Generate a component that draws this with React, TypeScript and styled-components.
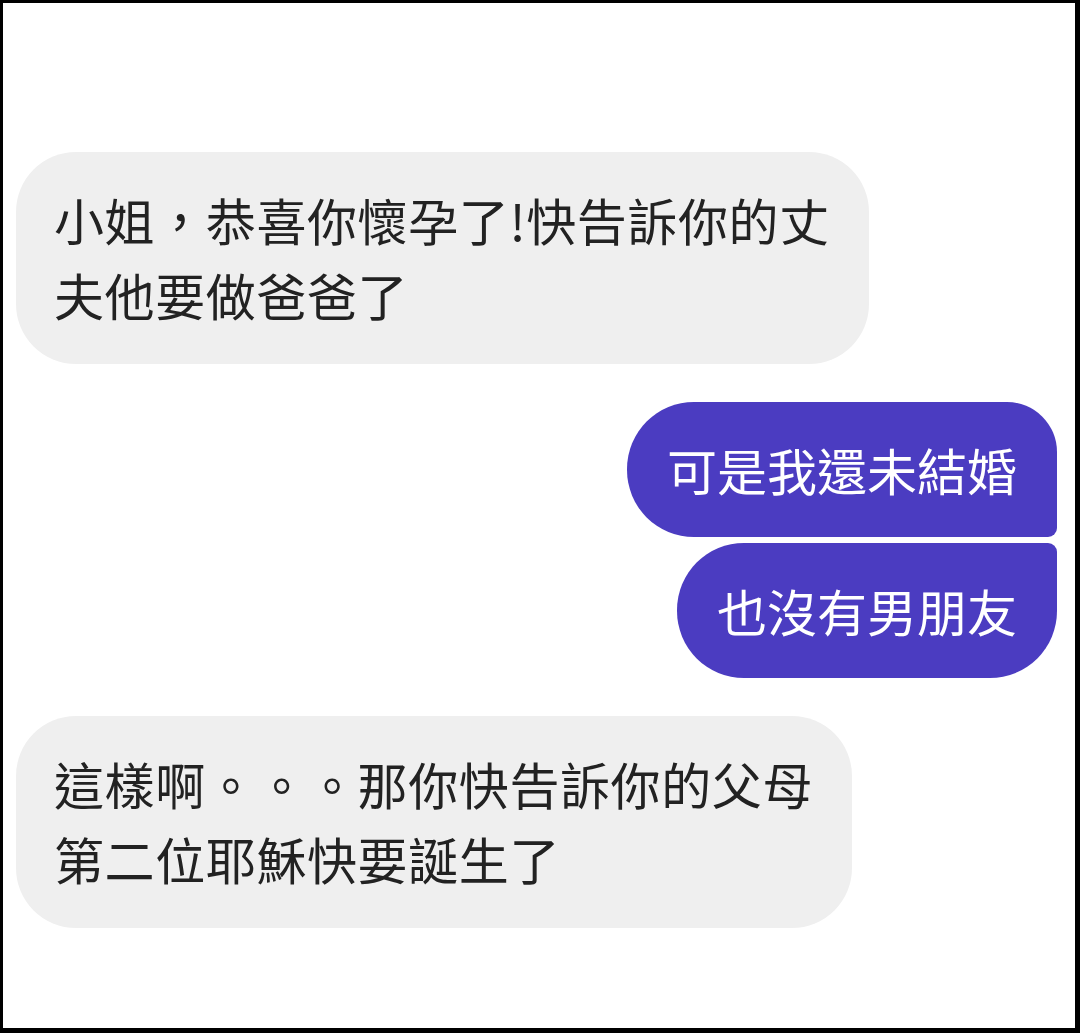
import React from 'react';
import styled, { createGlobalStyle } from 'styled-components';

const GlobalStyle = createGlobalStyle`
  html, body {
    margin: 0;
    padding: 0;
    background: #000;
  }
  * {
    box-sizing: border-box;
  }
`;

const Frame = styled.div`
  width: 1080px;
  height: 1033px;
  border-style: solid;
  border-color: #000;
  border-width: 3px 5px 5px 3px;
  background: #fff;
  padding: 149px 18px 0 13px;
  display: flex;
  flex-direction: column;
  gap: 38px;
  font-family: 'Noto Sans CJK TC', 'Noto Sans CJK SC', sans-serif;
`;

const Group = styled.div<{ $mine?: boolean }>`
  display: flex;
  flex-direction: column;
  align-items: ${(p) => (p.$mine ? 'flex-end' : 'flex-start')};
  gap: 6px;
`;

const Bubble = styled.div`
  font-size: 50px;
  line-height: 75px;
  white-space: nowrap;
`;

const Received = styled(Bubble)`
  background: #efefef;
  color: #222;
  letter-spacing: 0.6px;
  padding: 30px 39px 32px 38px;
  border-radius: 60px;
`;

const Sent = styled(Bubble)<{ $pos: 'first' | 'last' }>`
  background: #4b3cc1;
  color: #fff;
  padding: 30px 40px;
  border-radius: ${(p) =>
    p.$pos === 'first' ? '67px 50px 9px 67px' : '67px 9px 67px 67px'};
`;

interface Message {
  lines: string[];
}

const incomingFirst: Message = {
  lines: ['小姐，恭喜你懷孕了!快告訴你的丈', '夫他要做爸爸了'],
};

const outgoing = ['可是我還未結婚', '也沒有男朋友'];

const incomingSecond: Message = {
  lines: ['這樣啊。。。那你快告訴你的父母', '第二位耶穌快要誕生了'],
};

const Lines: React.FunctionComponent<{ lines: string[] }> = ({ lines }) => (
  <>
    {lines.map((line, i) => (
      <React.Fragment key={line}>
        {i > 0 && <br />}
        {line}
      </React.Fragment>
    ))}
  </>
);

const App: React.FunctionComponent = () => {
  return (
    <>
      <GlobalStyle />
      <Frame>
        <Group>
          <Received>
            <Lines lines={incomingFirst.lines} />
          </Received>
        </Group>
        <Group $mine>
          {outgoing.map((text, i) => (
            <Sent key={text} $pos={i === 0 ? 'first' : 'last'}>
              {text}
            </Sent>
          ))}
        </Group>
        <Group>
          <Received>
            <Lines lines={incomingSecond.lines} />
          </Received>
        </Group>
      </Frame>
    </>
  );
};

export default App;
